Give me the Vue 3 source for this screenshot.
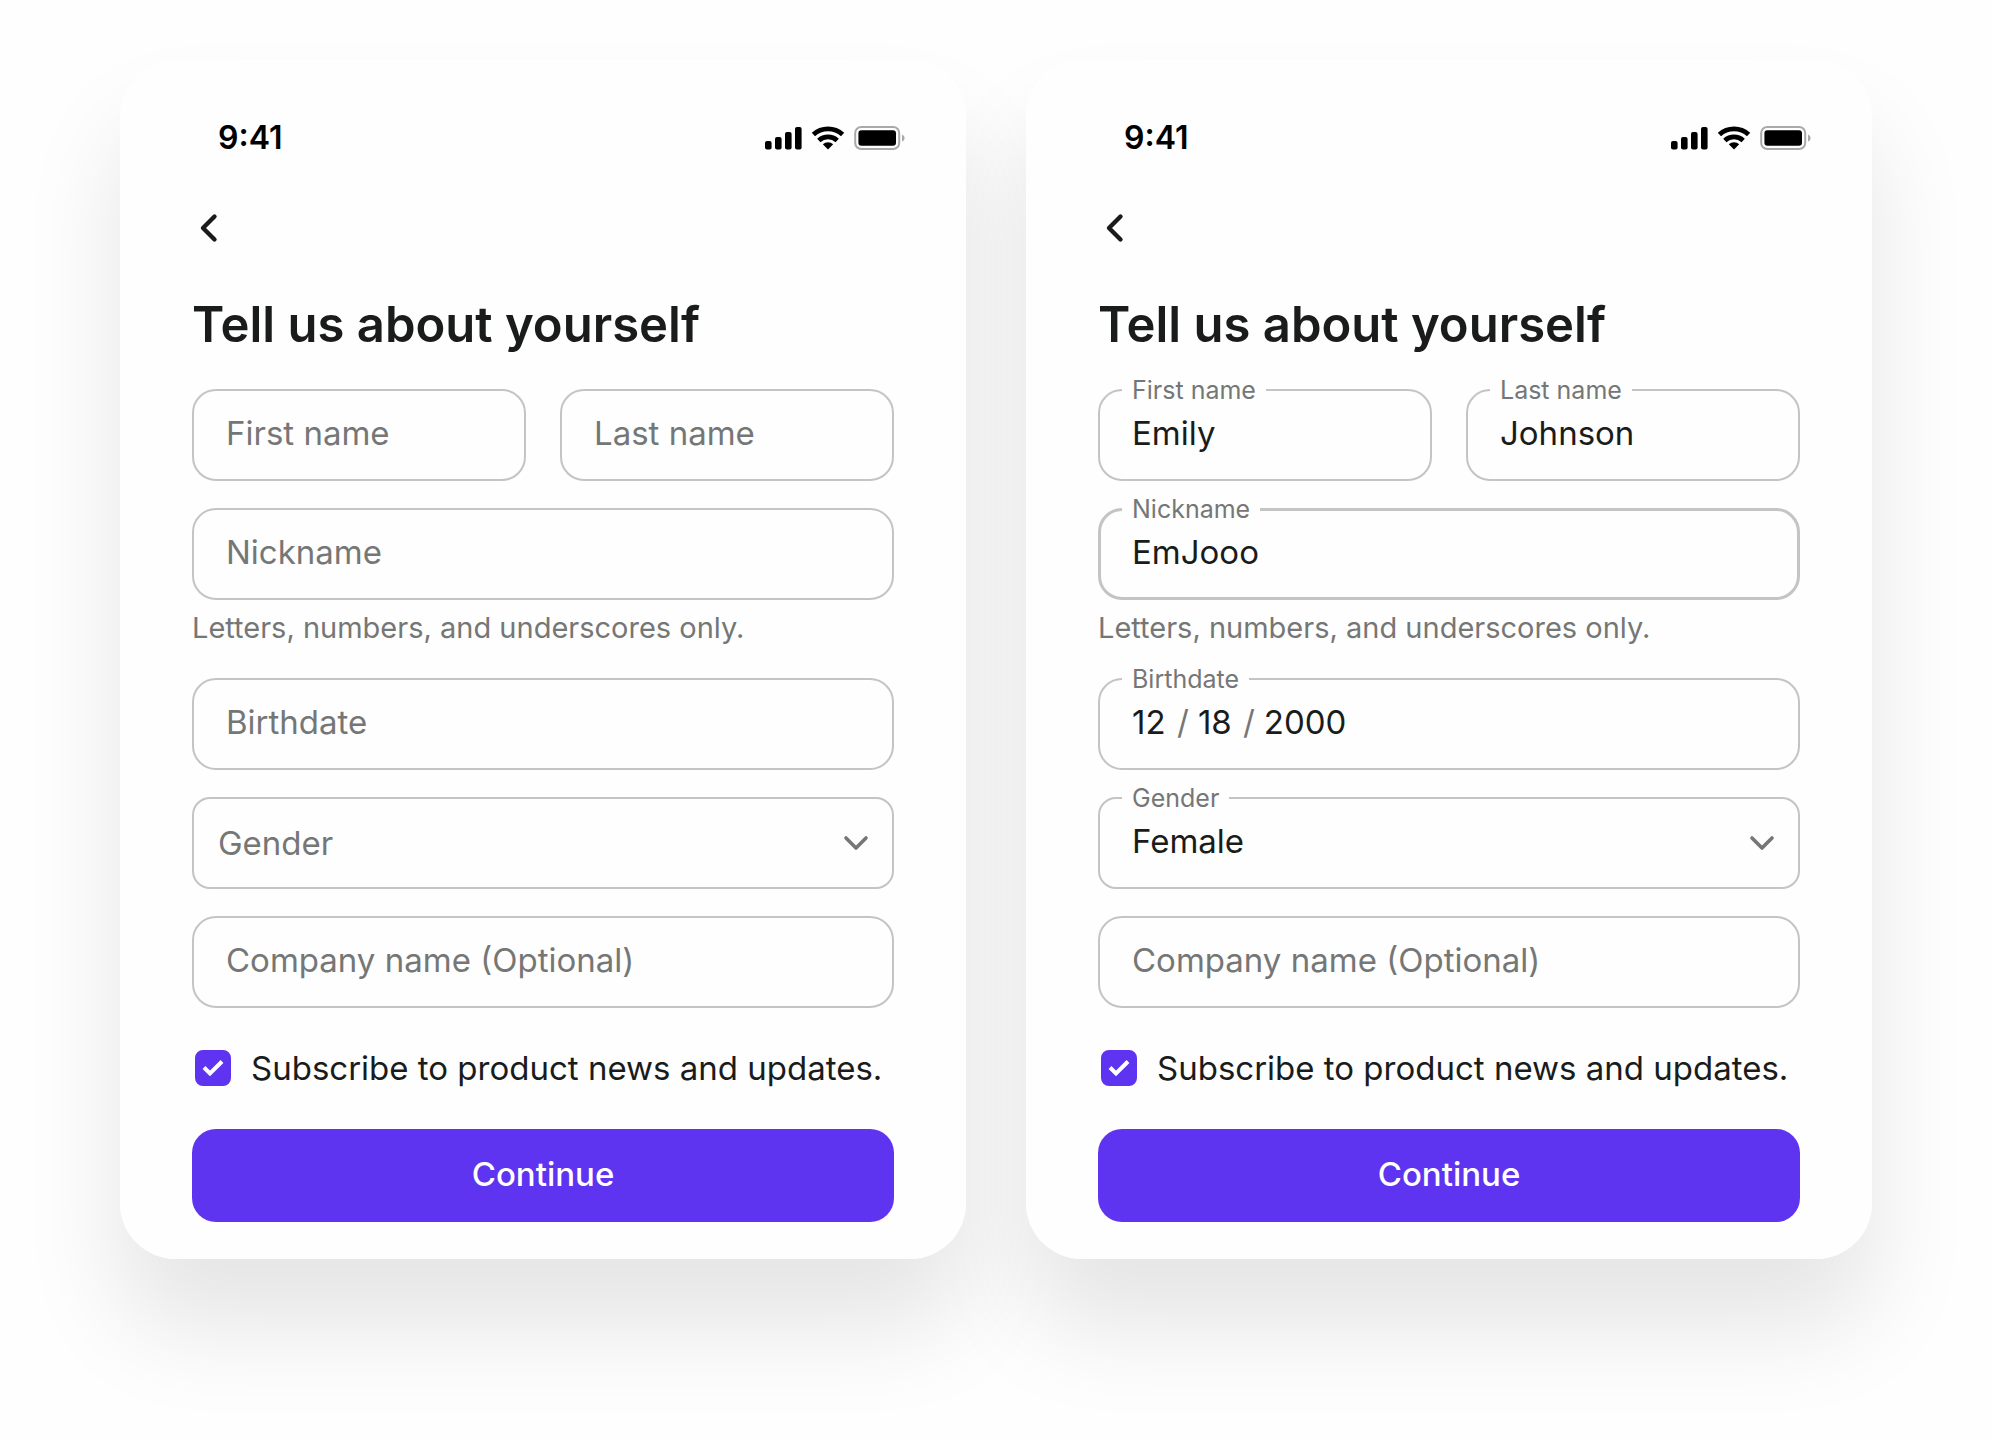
<script setup>
import { reactive } from 'vue'

// One entry per phone screen: empty form and filled form
const screens = reactive([
  {
    id: 'empty',
    form: {
      firstName: '',
      lastName: '',
      nickname: '',
      birthdate: { month: '', day: '', year: '' },
      gender: '',
      company: '',
      subscribe: true
    },
    focused: ''
  },
  {
    id: 'filled',
    form: {
      firstName: 'Emily',
      lastName: 'Johnson',
      nickname: 'EmJooo',
      birthdate: { month: '12', day: '18', year: '2000' },
      gender: 'Female',
      company: '',
      subscribe: true
    },
    focused: 'nickname'
  }
])

const genders = ['Female', 'Male', 'Other']

const hasDate = (date) => Boolean(date.month || date.day || date.year)
</script>

<template>
  <main class="page">
    <section v-for="screen in screens" :key="screen.id" class="card">
      <header class="status-bar">
        <span class="time">9:41</span>
        <svg class="status-icons" width="142" height="26" viewBox="0 0 142 26" aria-hidden="true">
          <!-- signal -->
          <rect x="1" y="16" width="6.6" height="8.4" rx="2" />
          <rect x="11" y="12" width="6.6" height="12.4" rx="2" />
          <rect x="21" y="7" width="6.6" height="17.4" rx="2" />
          <rect x="31" y="2" width="6.6" height="22.4" rx="2" />
          <!-- wifi -->
          <g fill="none" stroke="#000" stroke-width="4.8">
            <path d="M49.4 9.6a21.4 21.4 0 0 1 29.2 0" />
            <path d="M54.8 15.4a13.6 13.6 0 0 1 18.4 0" />
          </g>
          <path d="M64 24.4l-5.2-5.2a7.6 7.6 0 0 1 10.4 0z" />
          <!-- battery -->
          <rect x="91.2" y="2" width="44" height="22" rx="6" fill="none" stroke="#a9a9a9" stroke-width="2" />
          <rect x="94.4" y="5.2" width="37.6" height="15.6" rx="3" />
          <path d="M138 9.4c3.4 1.4 3.4 5.8 0 7.2z" fill="#a9a9a9" />
        </svg>
      </header>

      <button type="button" class="back-btn" aria-label="Back">
        <svg width="34" height="48" viewBox="0 0 34 48" aria-hidden="true">
          <path d="M22.5 12.5L11 24l11.5 11.5" />
        </svg>
      </button>

      <h1 class="title">Tell us about yourself</h1>

      <form class="form" @submit.prevent>
        <div class="row">
          <div class="field" :class="{ filled: screen.form.firstName }">
            <input :id="`${screen.id}-first`" v-model="screen.form.firstName" type="text" class="control" />
            <label :for="`${screen.id}-first`" class="label">First name</label>
          </div>
          <div class="field" :class="{ filled: screen.form.lastName }">
            <input :id="`${screen.id}-last`" v-model="screen.form.lastName" type="text" class="control" />
            <label :for="`${screen.id}-last`" class="label">Last name</label>
          </div>
        </div>

        <div class="group">
          <div class="field" :class="{ filled: screen.form.nickname, active: screen.focused === 'nickname' }">
            <input :id="`${screen.id}-nick`" v-model="screen.form.nickname" type="text" class="control"
              :aria-describedby="`${screen.id}-hint`" />
            <label :for="`${screen.id}-nick`" class="label">Nickname</label>
          </div>
          <p :id="`${screen.id}-hint`" class="hint">Letters, numbers, and underscores only.</p>
        </div>

        <div class="field" :class="{ filled: hasDate(screen.form.birthdate) }">
          <div class="control date">
            <input :id="`${screen.id}-birth`" v-model="screen.form.birthdate.month" type="text" maxlength="2"
              class="part" />
            <template v-if="hasDate(screen.form.birthdate)">
              <span class="slash">/</span>
              <input v-model="screen.form.birthdate.day" type="text" maxlength="2" class="part" aria-label="Day" />
              <span class="slash">/</span>
              <input v-model="screen.form.birthdate.year" type="text" maxlength="4" class="part year"
                aria-label="Year" />
            </template>
          </div>
          <label :for="`${screen.id}-birth`" class="label">Birthdate</label>
        </div>

        <div class="field select-field" :class="{ filled: screen.form.gender }">
          <select :id="`${screen.id}-gender`" v-model="screen.form.gender" class="control">
            <option value="" hidden></option>
            <option v-for="gender in genders" :key="gender" :value="gender">{{ gender }}</option>
          </select>
          <label :for="`${screen.id}-gender`" class="label">Gender</label>
          <svg class="chevron" width="28" height="20" viewBox="0 0 28 20" aria-hidden="true">
            <path d="M4 5l10 10L24 5" />
          </svg>
        </div>

        <div class="field" :class="{ filled: screen.form.company }">
          <input :id="`${screen.id}-company`" v-model="screen.form.company" type="text" class="control" />
          <label :for="`${screen.id}-company`" class="label">Company name (Optional)</label>
        </div>

        <div class="subscribe">
          <span class="checkbox">
            <input :id="`${screen.id}-news`" v-model="screen.form.subscribe" type="checkbox" />
            <svg v-if="screen.form.subscribe" width="36" height="36" viewBox="0 0 36 36" aria-hidden="true">
              <path d="M9 17.5l6 6L27 11.5" />
            </svg>
          </span>
          <label :for="`${screen.id}-news`">Subscribe to product news and updates.</label>
        </div>

        <button type="submit" class="submit-btn">Continue</button>
      </form>
    </section>
  </main>
</template>

<style>
body {
  margin: 0;
  background: #fefefe;
}
</style>

<style scoped>
.page {
  box-sizing: border-box;
  display: grid;
  grid-template-columns: 1fr 1fr;
  gap: 60px;
  min-height: 100vh;
  align-items: start;
  padding: 60px 120px 160px;
  isolation: isolate;
  overflow: hidden;
  font-family: Inter, 'Liberation Sans', sans-serif;
  font-size: 33px;
  line-height: 40px;
  color: #1a1c1b;
}

.card {
  position: relative;
  padding: 48px 72px 37px;
  border-radius: 56px;
  background: #fefefe;
}

/* Shadow sits below both cards so it never tints its neighbour */
.card::before {
  content: '';
  position: absolute;
  inset: 0;
  z-index: -1;
  border-radius: 56px;
  box-shadow: 0 68px 100px rgba(0, 0, 0, 0.1);
}

.status-bar {
  display: flex;
  align-items: center;
  justify-content: space-between;
  height: 60px;
  margin-right: -12px;
  padding-left: 26px;
  color: #000;
}

.time {
  font-size: 32px;
  font-weight: 600;
}

.back-btn {
  display: block;
  height: 48px;
  margin-top: 36px;
  padding: 0;
  border: none;
  background: none;
  cursor: pointer;
}

.back-btn svg {
  display: block;
  fill: none;
  stroke: #1a1c1b;
  stroke-width: 4.4;
  stroke-linecap: round;
  stroke-linejoin: round;
}

.title {
  margin: 43px 0 34px;
  font-size: 49px;
  font-weight: 600;
  line-height: 60px;
  white-space: nowrap;
}

.form {
  display: flex;
  flex-direction: column;
  gap: 27px;
}

.row {
  display: grid;
  grid-template-columns: 1fr 1fr;
  gap: 34px;
}

.field {
  position: relative;
}

.control {
  display: block;
  box-sizing: border-box;
  width: 100%;
  height: 92px;
  margin: 0;
  padding: 0 32px 4px;
  border: 2px solid #c4c4c4;
  border-radius: 24px;
  outline: none;
  appearance: none;
  background: transparent;
  font: inherit;
  color: inherit;
}

.active .control {
  padding: 0 31px 4px;
  border-width: 3px;
}

.select-field .control {
  border-radius: 18px;
}

.label {
  position: absolute;
  top: 24px;
  left: 34px;
  color: #757776;
  white-space: nowrap;
  pointer-events: none;
}

.select-field .label {
  top: 26px;
  left: 26px;
}

.field.filled .label {
  top: -14px;
  left: 24px;
  padding: 0 10px;
  background: #fefefe;
  font-size: 25px;
  line-height: 30px;
}

.control.date {
  display: flex;
  align-items: center;
  gap: 9px;
}

.part {
  width: 36px;
  padding: 0;
  border: none;
  outline: none;
  background: transparent;
  font: inherit;
  color: inherit;
}

.part.year {
  width: 120px;
}

.slash {
  color: #757776;
}

.chevron {
  position: absolute;
  top: 36px;
  right: 24px;
  fill: none;
  stroke: #757776;
  stroke-width: 3.6;
  stroke-linecap: round;
  stroke-linejoin: round;
  pointer-events: none;
}

.hint {
  margin: 11px 0 6px;
  font-size: 29px;
  line-height: 34px;
  color: #757776;
  white-space: nowrap;
}

.subscribe {
  display: flex;
  align-items: center;
  gap: 20px;
  margin: 13px 0 14px;
  padding-left: 3px;
  white-space: nowrap;
}

.checkbox {
  position: relative;
  display: flex;
}

.checkbox input {
  width: 36px;
  height: 36px;
  margin: 0;
  border: 2px solid #c4c4c4;
  border-radius: 8px;
  appearance: none;
}

.checkbox input:checked {
  border-color: #5e34f0;
  background: #5e34f0;
}

.checkbox svg {
  position: absolute;
  inset: 0;
  fill: none;
  stroke: #fff;
  stroke-width: 4;
  pointer-events: none;
}

.submit-btn {
  height: 93px;
  padding: 0 0 4px;
  border: none;
  border-radius: 24px;
  background: #5e34f0;
  font: inherit;
  font-weight: 500;
  color: #fff;
  cursor: pointer;
}
</style>
